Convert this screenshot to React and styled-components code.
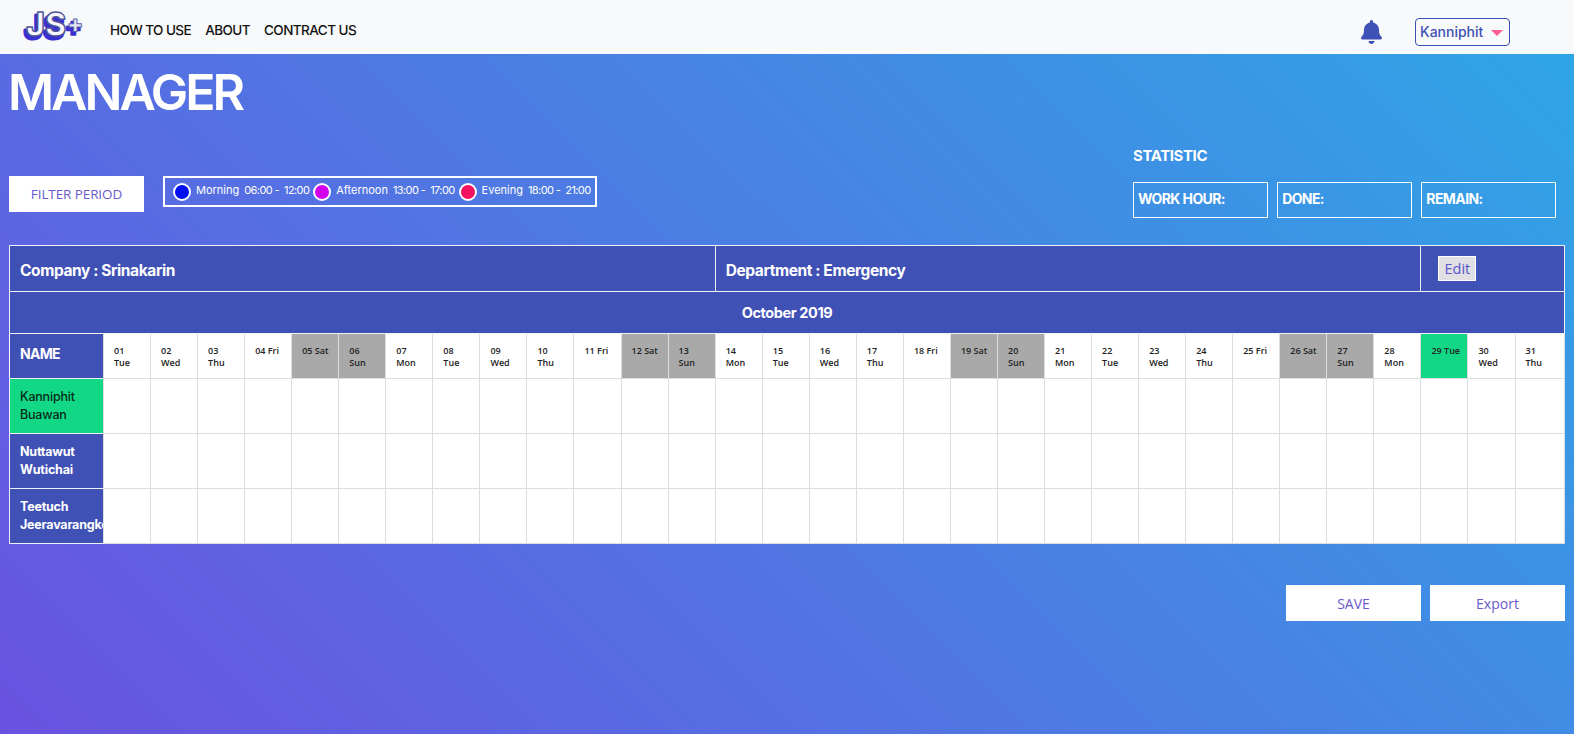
import React from "react";
import styled, { createGlobalStyle } from "styled-components";
import { FaBell } from "react-icons/fa";

const GlobalStyle = createGlobalStyle`
  html, body {
    margin: 0;
    padding: 0;
    height: 100%;
    overflow: hidden;
    font-family: "Inter", "Liberation Sans", sans-serif;
  }
`;

const weekdays = ["Tue", "Wed", "Thu", "Fri", "Sat", "Sun", "Mon"];
const TODAY = 29;

// October 2019 starts on a Tuesday
const days = Array.from({ length: 31 }, (_, i) => {
  const name = weekdays[i % 7];
  const date = i + 1;
  return {
    date,
    num: String(date).padStart(2, "0"),
    name,
    weekend: name === "Sat" || name === "Sun",
    today: date === TODAY,
    oneLine: name === "Fri" || name === "Sat" || date === TODAY,
  };
});

const staff = [
  { first: "Kanniphit", last: "Buawan", active: true },
  { first: "Nuttawut", last: "Wutichai" },
  { first: "Teetuch", last: "Jeeravarangkoon" },
];

const shifts = [
  { label: "Morning", time: "06:00 -  12:00", color: "#0010f0" },
  { label: "Afternoon", time: "13:00 -  17:00", color: "#d000ee" },
  { label: "Evening", time: "18:00 -  21:00", color: "#f5125f" },
];

function Logo() {
  const font = { fontFamily: "Inter, sans-serif", fontWeight: 800 };
  return (
    <LogoSvg viewBox="0 0 64 34" aria-label="JS+">
      <g style={font} fontSize="33" strokeLinejoin="round">
        <text x="2" y="31" fill="#3a2fd0" stroke="#3a2fd0" strokeWidth="3" textLength="40" lengthAdjust="spacingAndGlyphs">JS</text>
        <text x="4" y="28" fill="#f6f6fc" stroke="#4f5598" strokeWidth="1.5" textLength="40" lengthAdjust="spacingAndGlyphs">JS</text>
      </g>
      <g style={font} fontSize="24" strokeLinejoin="round">
        <text x="43" y="27" fill="#3a2fd0" stroke="#3a2fd0" strokeWidth="2.5">+</text>
        <text x="45" y="24" fill="#e8e8f6" stroke="#5a64a8" strokeWidth="1">+</text>
      </g>
    </LogoSvg>
  );
}

export default function App() {
  return (
    <Page>
      <GlobalStyle />
      <Header>
        <Brand>
          <Logo />
          <Nav>
            <NavLink>HOW TO USE</NavLink>
            <NavLink>ABOUT</NavLink>
            <NavLink>CONTRACT US</NavLink>
          </Nav>
        </Brand>
        <UserArea>
          <BellIcon />
          <UserMenu>
            Kanniphit
            <Caret />
          </UserMenu>
        </UserArea>
      </Header>

      <Main>
        <Title>MANAGER</Title>
        <Toolbar>
          <FilterGroup>
            <FilterButton>FILTER PERIOD</FilterButton>
            <Legend>
              {shifts.map((s) => (
                <LegendItem key={s.label}>
                  <Dot $color={s.color} />
                  <span>{s.label}</span>
                  <LegendTime>{s.time}</LegendTime>
                </LegendItem>
              ))}
            </Legend>
          </FilterGroup>
          <Statistic>
            <StatisticTitle>STATISTIC</StatisticTitle>
            <StatRow>
              <StatBox>WORK HOUR:</StatBox>
              <StatBox>DONE:</StatBox>
              <StatBox>REMAIN:</StatBox>
            </StatRow>
          </Statistic>
        </Toolbar>

        <Schedule>
          <colgroup>
            <col style={{ width: 94 }} />
            {days.map((d) => (
              <DayCol key={d.date} $last={d.date === 31} />
            ))}
          </colgroup>
          <tbody>
            <InfoRow>
              <InfoCell colSpan={14}>Company : Srinakarin</InfoCell>
              <InfoCell colSpan={15}>Department : Emergency</InfoCell>
              <InfoCell colSpan={3}>
                <EditButton>Edit</EditButton>
              </InfoCell>
            </InfoRow>
            <MonthRow>
              <MonthCell colSpan={32}>October 2019</MonthCell>
            </MonthRow>
            <DayRow>
              <NameHead>NAME</NameHead>
              {days.map((d) => (
                <DayCell key={d.date} $weekend={d.weekend} $today={d.today}>
                  {d.num}
                  {d.oneLine ? " " : <br />}
                  {d.name}
                </DayCell>
              ))}
            </DayRow>
            {staff.map((p) => (
              <StaffRow key={p.first}>
                <NameCell $active={p.active}>
                  {p.first}
                  <br />
                  {p.last}
                </NameCell>
                {days.map((d) => (
                  <SlotCell key={d.date} />
                ))}
              </StaffRow>
            ))}
          </tbody>
        </Schedule>

        <Actions>
          <WhiteButton>SAVE</WhiteButton>
          <WhiteButton>Export</WhiteButton>
        </Actions>
      </Main>
    </Page>
  );
}

const Page = styled.div`
  height: 734px;
  display: flex;
  flex-direction: column;
  background: linear-gradient(45deg, #6a52e0 0%, #2ea7e6 100%);
`;

const Header = styled.header`
  height: 54px;
  flex: none;
  display: flex;
  align-items: center;
  justify-content: space-between;
  padding: 0 64px 0 22px;
  background: #f8f9fa;
`;

const Brand = styled.div`
  display: flex;
  align-items: center;
  gap: 24px;
`;

const LogoSvg = styled.svg`
  width: 64px;
  height: 34px;
  margin-top: -5px;
  overflow: visible;
`;

const Nav = styled.nav`
  display: flex;
  gap: 14px;
  padding-top: 5px;
`;

const NavLink = styled.a`
  font-size: 13.5px;
  font-weight: 500;
  letter-spacing: -0.55px;
  color: #111;
`;

const UserArea = styled.div`
  display: flex;
  align-items: center;
  gap: 33px;
  padding-top: 9px;
`;

const BellIcon = styled(FaBell)`
  width: 21px;
  height: 24px;
  color: #3f51b5;
`;

const UserMenu = styled.div`
  box-sizing: border-box;
  width: 95px;
  height: 28px;
  padding: 0 6px 0 4px;
  display: flex;
  align-items: center;
  justify-content: space-between;
  border: 1px solid #3f51b5;
  border-radius: 4px;
  font-size: 14px;
  font-weight: 500;
  color: #3f51b5;
`;

const Caret = styled.span`
  margin-top: 3px;
  border-style: solid;
  border-width: 6px 6.5px 0;
  border-color: #ff5c93 transparent transparent;
`;

const Main = styled.main`
  padding: 0 9px;
`;

const Title = styled.h1`
  margin: 10px 0 0 -1px;
  font-size: 50px;
  line-height: 56px;
  font-weight: 600;
  letter-spacing: -3px;
  color: #fff;
`;

const Toolbar = styled.section`
  height: 88px;
  margin-top: 10px;
  padding-right: 9px;
  display: flex;
  justify-content: space-between;
  align-items: flex-end;
`;

const FilterGroup = styled.div`
  display: flex;
  align-items: flex-start;
  gap: 19px;
  margin-bottom: 6px;
`;

const WhiteButton = styled.button`
  width: 135px;
  height: 36px;
  padding: 0;
  border: 0;
  background: #fff;
  font-family: "Open Sans", sans-serif;
  font-size: 14px;
  color: #6a5acd;
`;

const FilterButton = styled(WhiteButton)`
  font-size: 13.5px;
  letter-spacing: -0.1px;
`;

const Legend = styled.div`
  box-sizing: border-box;
  width: 434px;
  height: 31px;
  padding: 0 4px 4px 8px;
  display: flex;
  align-items: center;
  gap: 4px;
  border: 2px solid #fff;
`;

const LegendItem = styled.div`
  display: flex;
  align-items: center;
  gap: 5px;
  font-size: 11px;
  white-space: pre;
  color: #fff;
`;

const LegendTime = styled.span`
  letter-spacing: -0.6px;
`;

const Dot = styled.span`
  box-sizing: border-box;
  width: 18px;
  height: 18px;
  margin-top: 4px;
  border: 2px solid #fff;
  border-radius: 50%;
  background: ${(p) => p.$color};
`;

const Statistic = styled.div`
  width: 423px;
`;

const StatisticTitle = styled.h3`
  margin: 0 0 16px;
  font-size: 15px;
  line-height: 20px;
  font-weight: 700;
  letter-spacing: -0.4px;
  color: #fff;
`;

const StatRow = styled.div`
  display: flex;
  gap: 9.5px;
`;

const StatBox = styled.div`
  box-sizing: border-box;
  width: 135px;
  height: 36px;
  padding: 0 0 3px 4px;
  display: flex;
  align-items: center;
  border: 1px solid #fff;
  font-size: 14px;
  font-weight: 700;
  letter-spacing: -0.6px;
  color: #fff;
`;

const Schedule = styled.table`
  width: 1556px;
  margin-top: 27px;
  table-layout: fixed;
  border-collapse: collapse;
  background: #fff;
  border: 1px solid #fff;
`;

const DayCol = styled.col`
  width: ${(p) => (p.$last ? "auto" : "47.05px")};
`;

const InfoRow = styled.tr`
  height: 46px;
`;

const InfoCell = styled.td`
  padding: 3px 10px 0;
  border: 1px solid #f0f0f8;
  background: #3f51b5;
  font-size: 15.5px;
  font-weight: 700;
  letter-spacing: -0.4px;
  color: #fff;

  &:last-child {
    padding: 0 0 0 17px;
  }
`;

const EditButton = styled.button`
  display: block;
  width: 38px;
  height: 25px;
  padding: 0;
  border: 1px solid #fff;
  background: #e0dfe3;
  font-family: "Open Sans", sans-serif;
  font-size: 14.5px;
  color: #5a55cd;
`;

const MonthRow = styled.tr`
  height: 42px;
`;

const MonthCell = styled.td`
  border: 1px solid #f0f0f8;
  background: #3f51b5;
  text-align: center;
  font-size: 14.5px;
  font-weight: 700;
  letter-spacing: -0.4px;
  color: #fff;
`;

const DayRow = styled.tr`
  height: 45px;
`;

const NameHead = styled.td`
  padding: 0 10px 5px;
  background: #3f51b5;
  font-size: 14px;
  font-weight: 700;
  letter-spacing: -0.7px;
  color: #fff;
`;

const DayCell = styled.td`
  padding: 11px 0 0 10px;
  vertical-align: top;
  border: 1px solid #ddd;
  background: ${(p) => (p.$today ? "#12d886" : p.$weekend ? "#a9a9a9" : "#fff")};
  font-family: "Open Sans", sans-serif;
  font-size: 9px;
  line-height: 12px;
  font-weight: 600;
  white-space: nowrap;
  color: #222;
`;

const StaffRow = styled.tr`
  height: 55px;
`;

const NameCell = styled.td`
  padding: 0 0 0 10px;
  overflow: hidden;
  white-space: nowrap;
  border: 1px solid #f0f0f8;
  border-right: 0;
  background: ${(p) => (p.$active ? "#12d886" : "#3f51b5")};
  font-size: 12.5px;
  line-height: 18px;
  font-weight: ${(p) => (p.$active ? 500 : 700)};
  letter-spacing: -0.2px;
  color: ${(p) => (p.$active ? "#062a1a" : "#fff")};
`;

const SlotCell = styled.td`
  border: 1px solid #ddd;
`;

const Actions = styled.div`
  margin-top: 41px;
  display: flex;
  justify-content: flex-end;
  gap: 9px;
`;
